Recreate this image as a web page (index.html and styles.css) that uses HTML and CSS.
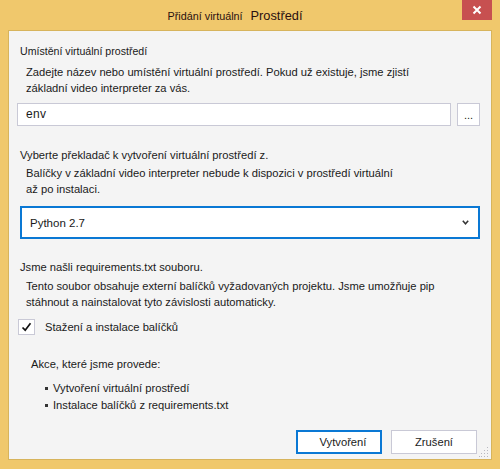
FILE: index.html
```html
<!DOCTYPE html>
<html>
<head>
<meta charset="utf-8">
<link rel="stylesheet" href="styles.css">
</head>
<body>
<div class="window">
  <div class="titlebar">
    <div class="title"><span class="t-small">Přidání virtuální</span><span class="t-big">Prostředí</span></div>
    <div class="close">
      <svg width="10" height="10" viewBox="0 0 10 10"><path d="M1.5 1.5 L8.5 8.5 M8.5 1.5 L1.5 8.5" stroke="#fff" stroke-width="2" fill="none"/></svg>
    </div>
  </div>
  <div class="client">
    <div class="label first">Umístění virtuální prostředí</div>
    <div class="desc d1">Zadejte název nebo umístění virtuální prostředí. Pokud už existuje, jsme zjistí<br>základní video interpreter za vás.</div>
    <div class="path-row">
      <div class="textbox">env</div>
      <div class="browse">...</div>
    </div>
    <div class="label l2">Vyberte překladač k vytvoření virtuální prostředí z.</div>
    <div class="desc d2">Balíčky v základní video interpreter nebude k dispozici v prostředí virtuální<br>až po instalaci.</div>
    <div class="combo">
      <span>Python 2.7</span>
      <svg width="7" height="5" viewBox="0 0 7 5"><path d="M0.8 0.8 L3.5 3.8 L6.2 0.8" stroke="#333" stroke-width="1.5" fill="none"/></svg>
    </div>
    <div class="label l3">Jsme našli requirements.txt souboru.</div>
    <div class="desc d3">Tento soubor obsahuje externí balíčků vyžadovaných projektu. Jsme umožňuje pip<br>stáhnout a nainstalovat tyto závislosti automaticky.</div>
    <div class="check-row">
      <div class="checkbox">
        <svg width="11" height="10" viewBox="0 0 11 10"><path d="M1.5 5.5 L4.2 8.2 L9.5 1.2" stroke="#111" stroke-width="1.7" fill="none"/></svg>
      </div>
      <span>Stažení a instalace balíčků</span>
    </div>
    <div class="actions-title">Akce, které jsme provede:</div>
    <ul class="actions">
      <li>Vytvoření virtuální prostředí</li>
      <li>Instalace balíčků z requirements.txt</li>
    </ul>
    <div class="buttons">
      <div class="btn primary">Vytvoření</div>
      <div class="btn">Zrušení</div>
    </div>
    <svg class="grip" width="10" height="10" viewBox="0 0 10 10" fill="#b8b8c0">
      <rect x="8" y="0" width="1" height="1"/>
      <rect x="5" y="3" width="1" height="1"/><rect x="8" y="3" width="1" height="1"/>
      <rect x="2" y="6" width="1" height="1"/><rect x="5" y="6" width="1" height="1"/><rect x="8" y="6" width="1" height="1"/>
      <rect x="0" y="9" width="1" height="1"/><rect x="2" y="9" width="1" height="1"/><rect x="5" y="9" width="1" height="1"/><rect x="8" y="9" width="1" height="1"/>
    </svg>
  </div>
</div>
</body>
</html>
```
FILE: styles.css
```css
html, body {
  margin: 0;
  padding: 0;
}
body {
  font-family: "Liberation Sans", Arial, sans-serif;
  font-size: 11.2px;
  color: #1a1a1a;
}
.window {
  width: 500px;
  height: 469px;
  background: #f0c86c;
  position: relative;
  box-sizing: border-box;
}
.titlebar {
  height: 30px;
  position: relative;
  display: flex;
  align-items: center;
  justify-content: center;
}
.title {
  color: #2a1010;
  padding-right: 30px;
  white-space: nowrap;
  display: flex;
  align-items: baseline;
}
.t-small {
  font-size: 10.8px;
}
.t-big {
  font-size: 12.8px;
  margin-left: 8px;
}
.close {
  position: absolute;
  right: 8px;
  top: 0;
  width: 30px;
  height: 20px;
  background: #c75050;
  display: flex;
  align-items: center;
  justify-content: center;
}
.client {
  margin: 0 8px;
  height: 430px;
  box-sizing: border-box;
  border: 1px solid #d7b45c;
  background: #f4f4f4;
  padding: 12px 11px 5px 11px;
  display: flex;
  flex-direction: column;
  position: relative;
}
.label, .desc, .actions-title {
  line-height: 16px;
  white-space: nowrap;
}
.label.first {
  font-size: 10.6px;
}
.desc {
  padding-left: 6px;
}
.d1 { margin-top: 5px; }
.d2 { margin-top: 2px; }
.d3 { margin-top: 3px; }
.path-row {
  display: flex;
  gap: 6px;
  margin: 7px 0 0 -3px;
}
.textbox {
  flex: 1;
  height: 23px;
  box-sizing: border-box;
  border: 1px solid #c9c9d6;
  background: #fff;
  padding-left: 8px;
  line-height: 21px;
  font-size: 12px;
  letter-spacing: 0.3px;
}
.browse {
  width: 23px;
  height: 23px;
  box-sizing: border-box;
  border: 1px solid #c9c9d6;
  background: #fff;
  text-align: center;
  line-height: 23px;
  font-size: 11px;
}
.l2 { margin-top: 21px; }
.combo {
  margin-top: 9px;
  height: 33px;
  box-sizing: border-box;
  border: 2px solid #0a78d4;
  background: #fff;
  display: flex;
  align-items: center;
  justify-content: space-between;
  padding: 0 9px 0 8px;
}
.combo span {
  font-size: 11.5px;
}
.l3 { margin-top: 20px; }
.check-row {
  margin-top: 9px;
  display: flex;
  align-items: center;
  height: 16px;
}
.checkbox {
  width: 17px;
  height: 16px;
  box-sizing: border-box;
  border: 1px solid #c9c9d6;
  background: #fff;
  margin-left: -2px;
  display: flex;
  align-items: center;
  justify-content: center;
}
.check-row span {
  margin-left: 10px;
  font-size: 11.2px;
}
.actions-title {
  margin-top: 21px;
  padding-left: 11px;
}
.actions {
  list-style: none;
  margin: 8px 0 0 0;
  padding: 0 0 0 25px;
}
.actions li {
  line-height: 17px;
  position: relative;
  padding-left: 8px;
}
.actions li::before {
  content: "";
  position: absolute;
  left: 0;
  top: 7px;
  width: 3px;
  height: 3px;
  background: #333;
}
.buttons {
  margin-top: auto;
  margin-right: 3px;
  display: flex;
  justify-content: flex-end;
  gap: 9px;
}
.btn {
  width: 86px;
  height: 24px;
  box-sizing: border-box;
  border: 1px solid #c9c9d6;
  background: #fff;
  display: flex;
  align-items: center;
  justify-content: center;
  font-size: 11.2px;
}
.btn.primary {
  border: 2px solid #0a78d4;
  padding-left: 8px;
}
.grip {
  position: absolute;
  right: 2px;
  bottom: 2px;
}
```
